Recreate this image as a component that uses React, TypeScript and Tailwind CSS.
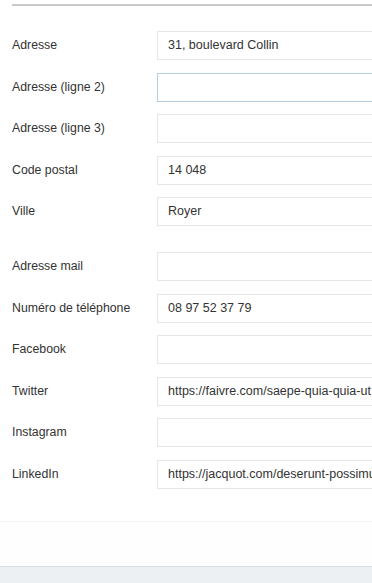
import React from "react";

const rows1 = [
  { label: "Adresse", value: "31, boulevard Collin" },
  { label: "Adresse (ligne 2)", value: "", focus: true },
  { label: "Adresse (ligne 3)", value: "" },
  { label: "Code postal", value: "14 048" },
  { label: "Ville", value: "Royer" },
];
const rows2 = [
  { label: "Adresse mail", value: "" },
  { label: "Numéro de téléphone", value: "08 97 52 37 79" },
  { label: "Facebook", value: "" },
  { label: "Twitter", value: "https://faivre.com/saepe-quia-quia-ut" },
  { label: "Instagram", value: "" },
  { label: "LinkedIn", value: "https://jacquot.com/deserunt-possimus" },
];

function Row({ label, value, focus }: { label: string; value: string; focus?: boolean }) {
  return (
    <div className="flex items-center h-[29px]">
      <div className="w-[145px] shrink-0 text-[12.3px] text-[#333]">{label}</div>
      <div
        className={
          "h-[29px] w-[260px] shrink-0 border flex items-center pl-[10px] text-[12.5px] text-[#333] whitespace-nowrap overflow-hidden " +
          (focus ? "border-[#b8cede]" : "border-[#e6e6e6]")
        }
      >
        {value}
      </div>
    </div>
  );
}

export default function App() {
  return (
    <div
      className="w-[372px] h-[583px] overflow-hidden bg-white flex flex-col"
      style={{ fontFamily: '"Liberation Sans", Arial, sans-serif' }}
    >
      <div className="pl-[12px] pt-[4px]">
        <div className="h-[2px] bg-[#c9c9c9]" />
      </div>
      <div className="pl-[12px] pt-[25px] flex flex-col gap-[12.5px]">
        {rows1.map((r) => (
          <Row key={r.label} {...r} />
        ))}
        <div className="h-[13.5px] -mt-[12.5px]" />
        {rows2.map((r) => (
          <Row key={r.label} {...r} />
        ))}
      </div>
      <div className="mt-[32px] h-[1px] bg-[#f4f4f4]" />
      <div className="h-[44px] bg-[#fefefe]" />
      <div className="border-t border-[#dde0e2] bg-[#edf0f2] flex-1" />
    </div>
  );
}
